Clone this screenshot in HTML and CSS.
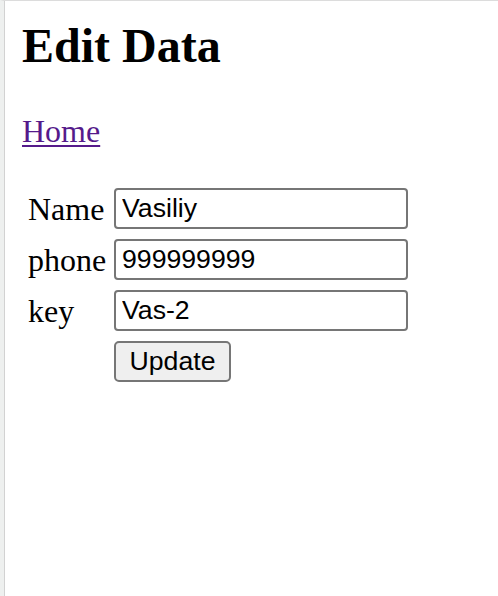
FILE: index.html
```html
<!DOCTYPE html>
<html lang="en">
<head>
<meta charset="utf-8">
<title>Edit Data</title>
<link rel="stylesheet" href="styles.css">
</head>
<body>
<div class="frame">
  <div class="page">
    <h2 class="title">Edit Data</h2>
    <p class="nav"><a class="home-link" href="#">Home</a></p>
    <form class="edit-form">
      <label class="field-label" for="name">Name</label>
      <input class="field-input" id="name" type="text" value="Vasiliy">
      <label class="field-label" for="phone">phone</label>
      <input class="field-input" id="phone" type="text" value="999999999">
      <label class="field-label" for="key">key</label>
      <input class="field-input" id="key" type="text" value="Vas-2">
      <button class="submit-btn" type="button">Update</button>
    </form>
  </div>
</div>
</body>
</html>
```

FILE: styles.css
```css
html, body {
  margin: 0;
  padding: 0;
  background: #ffffff;
}

body {
  font-family: "Liberation Serif", "Times New Roman", serif;
  color: #000000;
}

.frame {
  border-top: 1px solid #dcdcdc;
  border-left: 4px solid #eef0ef;
  min-height: 595px;
  box-sizing: border-box;
}

.page {
  border-left: 1px solid #d2d2d2;
  min-height: 595px;
  box-sizing: border-box;
  padding: 18px 0 0 17px;
}

.title {
  margin: 0;
  font-size: 48px;
  line-height: 54px;
  font-weight: bold;
}

.nav {
  margin: 40px 0 0 0;
  font-size: 32px;
  line-height: 36px;
}

.home-link {
  color: #551a8b;
  text-decoration: underline;
  text-decoration-thickness: 2px;
  text-underline-offset: 3px;
}

.edit-form {
  margin: 39px 0 0 6px;
  display: grid;
  grid-template-columns: 78px 294px;
  grid-auto-rows: 41px;
  column-gap: 8px;
  row-gap: 10px;
}

.field-label {
  align-self: center;
  font-size: 32px;
  line-height: 36px;
  white-space: nowrap;
}

.field-input {
  box-sizing: border-box;
  width: 294px;
  height: 41px;
  margin: 0;
  padding: 0 6px;
  border: 2px solid #767676;
  border-radius: 4px;
  background: #ffffff;
  font-family: "Liberation Sans", Arial, sans-serif;
  font-size: 26.67px;
  color: #000000;
  outline: none;
}

.submit-btn {
  grid-column: 2;
  justify-self: start;
  box-sizing: border-box;
  width: 117px;
  height: 41px;
  margin: 0;
  padding: 0;
  border: 2px solid #767676;
  border-radius: 5px;
  background: #efefef;
  font-family: "Liberation Sans", Arial, sans-serif;
  font-size: 26.67px;
  color: #000000;
}
```
